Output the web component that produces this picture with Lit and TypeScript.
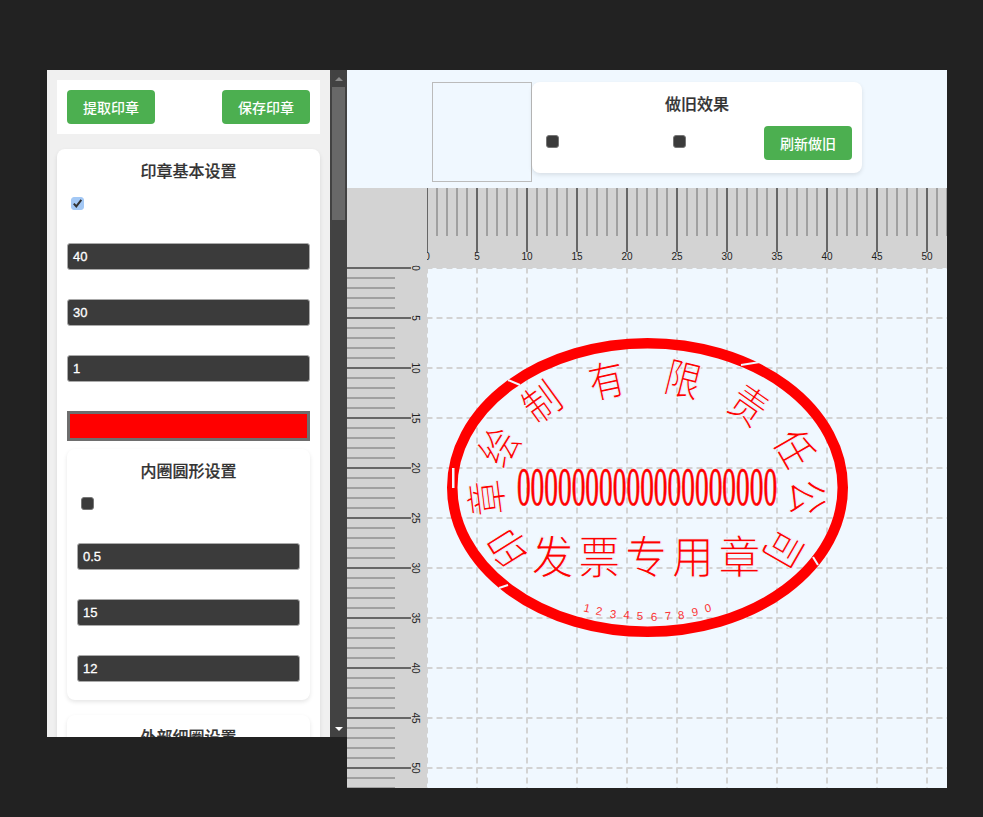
import { LitElement, html, css, svg } from "lit";
import { customElement } from "lit/decorators.js";

const CX = 220.5, CY = 219.5;

function rulerTop() {
  const out = [];
  for (let i = 0; i <= 52; i++) {
    const x = 80 + i * 10;
    if (i % 5 === 0) {
      out.push(svg`<line x1=${x} y1="0" x2=${x} y2="64" stroke="#666" stroke-width="2"></line>`);
      out.push(svg`<text class="tick" x=${x} y="72" text-anchor="middle">${i}</text>`);
    } else {
      out.push(svg`<line x1=${x} y1="0" x2=${x} y2="48" stroke="#a0a0a0" stroke-width="2"></line>`);
    }
  }
  return out;
}

function rulerLeft() {
  const out = [];
  for (let i = 0; i <= 52; i++) {
    const y = 80 + i * 10;
    if (i % 5 === 0) {
      out.push(svg`<line x1="0" y1=${y} x2="64" y2=${y} stroke="#666" stroke-width="2"></line>`);
      out.push(svg`<text class="tick" transform="translate(65 ${y}) rotate(90)" text-anchor="middle">${i}</text>`);
    } else {
      out.push(svg`<line x1="0" y1=${y} x2="48" y2=${y} stroke="#a0a0a0" stroke-width="2"></line>`);
    }
  }
  return out;
}

function grid() {
  const out = [];
  for (let i = 0; i <= 52; i += 5) {
    const p = 80 + i * 10;
    out.push(svg`<line x1=${p} y1="80" x2=${p} y2="600" stroke="#d3d3d3" stroke-width="2" stroke-dasharray="6 4" stroke-dashoffset=".5"></line>`);
    out.push(svg`<line x1="80" y1=${p} x2="600" y2=${p} stroke="#d3d3d3" stroke-width="2" stroke-dasharray="6 4" stroke-dashoffset=".5"></line>`);
  }
  return out;
}

// Characters placed around the seal: [char, x, y, rotation deg]
const ringChars: [string, number, number, number][] = [
  ["印", 159, 361, -122],
  ["章", 137, 310, -97],
  ["绘", 150, 257, -58],
  ["制", 193, 212, -36],
  ["有", 259, 190, -12],
  ["限", 337, 189, 14],
  ["责", 403, 215, 35],
  ["任", 450, 259, 60],
  ["公", 463, 309, 88],
  ["司", 439, 362, 120],
];

const codeChars: [string, number, number, number][] = [
  ["1", 240, 420, 13],
  ["2", 252, 423, 10],
  ["3", 266, 426, 6],
  ["4", 279.6, 427, 3],
  ["5", 293, 428, 0],
  ["6", 307, 429, -2],
  ["7", 321, 428, -5],
  ["8", 334, 427, -8],
  ["9", 348, 424, -11],
  ["0", 361, 420, -14],
];

@customElement("seal-canvas")
class SealCanvas extends LitElement {
  static styles = css`
    :host { display: block; width: 600px; height: 600px; }
    svg { display: block; }
    .tick { font: 10px "Liberation Sans", Arial, sans-serif; fill: #222; }
    .ring { font: 40px "Noto Sans CJK SC", sans-serif; fill: #f00; text-anchor: middle; dominant-baseline: central; }
    .main { font: 42px "Noto Sans CJK SC", sans-serif; fill: #f00; text-anchor: middle; }
    .zero { font: 27.4px "Liberation Serif", serif; fill: #f00; stroke: #f00; stroke-width: .35px; text-anchor: middle; }
    .code { font: 11.5px "Liberation Sans", Arial, sans-serif; fill: #f00; opacity: .8; text-anchor: middle; }
    .thin { stroke: #f0f8ff; stroke-width: 1px; paint-order: fill; }
  `;
  render() {
    return html`<svg width="600" height="600" viewBox="0 0 600 600">
      <rect x="0" y="0" width="600" height="80" fill="#d3d3d3"></rect>
      <rect x="0" y="80" width="80" height="520" fill="#d3d3d3"></rect>
      <rect x="80" y="80" width="520" height="520" fill="#f0f8ff"></rect>
      ${rulerTop()}
      <rect x="0" y="0" width="80" height="80" fill="#d3d3d3"></rect>
      ${rulerLeft()}${grid()}
      <ellipse cx=${CX + 80} cy=${CY + 80} rx="195.25" ry="144.25" fill="none" stroke="#f00" stroke-width="10.5"></ellipse>
      <line x1="161" y1="192" x2="173" y2="197" stroke="#f0f8ff" stroke-width="2"></line>
      <line x1="394" y1="177" x2="413" y2="174" stroke="#f0f8ff" stroke-width="2"></line>
      <line x1="152" y1="400" x2="161" y2="397" stroke="#f0f8ff" stroke-width="2"></line>
      <line x1="466" y1="369" x2="471" y2="377" stroke="#f0f8ff" stroke-width="2"></line>
      <rect x="105" y="280" width="2.5" height="20" fill="#f0f8ff"></rect>
      ${ringChars.map(([c, x, y, r]) => svg`<text class="ring thin" transform="translate(${x} ${y}) rotate(${r}) scale(.9 1.05)">${c}</text>`)}
      <text class="zero" transform="translate(300 316.5) scale(1 2)">0000000000000000000</text>
      <text class="main thin" transform="translate(299 385.5) scale(1 1.08)" textLength="229">发票专用章</text>
      ${codeChars.map(([c, x, y, r]) => svg`<text class="code" y="4" transform="translate(${x} ${y}) rotate(${r})">${c}</text>`)}
    </svg>`;
  }
}

@customElement("app-root")
class AppRoot extends LitElement {
  static styles = css`
    :host { display: block; width: 983px; height: 817px; background: #222; overflow: hidden;
      font-family: "Liberation Sans", "Noto Sans CJK SC", sans-serif; }
    .page { display: flex; align-items: flex-start; padding: 70px 0 0 47px; }
    .left { width: 300px; height: 667px; display: flex; overflow: hidden; flex: none; }
    .scroll { width: 283px; height: 667px; background: #f0f0f0; padding: 10px; box-sizing: border-box; overflow: hidden; flex: none; }
    .scrollbar { width: 17px; height: 667px; background: #424242; flex: none; display: flex; flex-direction: column; align-items: center; }
    .arrow-up { width: 0; height: 0; border: 4px solid transparent; border-top: 0; border-bottom: 4px solid #8a8a8a; margin-top: 7px; }
    .thumb { width: 13px; height: 133px; background: #686868; margin-top: 6px; }
    .arrow-down { width: 0; height: 0; border: 4px solid transparent; border-bottom: 0; border-top: 4px solid #fff; margin-top: auto; margin-bottom: 6px; }
    .actions { background: #fff; height: 54px; padding: 10px; box-sizing: border-box; display: flex; justify-content: space-between; }
    button { height: 34px; border: 0; border-radius: 4px; background: #4caf50; color: #fff; font: 500 14px "Liberation Sans", "Noto Sans CJK SC", sans-serif; padding: 0; width: 88px; }
    .card { background: #fff; border-radius: 8px; box-shadow: 0 2px 4px rgba(0,0,0,.1); padding: 10px; }
    .first { margin-top: 15px; height: 800px; }
    h3 { margin: 0; padding-top: 1px; font: 500 16px/24px "Liberation Sans", "Noto Sans CJK SC", sans-serif; -webkit-text-stroke: .2px #333; color: #333; text-align: center; }
    .check { display: block; width: 13px; height: 13px; margin: 0 0 0 4px; border-radius: 3px; background: #3b3b3b; border: 1px solid #767676; box-sizing: border-box; }
    .check.on { background: #a3c8f5; border-color: #a3c8f5; }
    .check svg { display: block; }
    .row { height: 56px; }
    .chk-row { margin-top: 13px; height: 46px; }
    .input { height: 27px; box-sizing: border-box; background: #3b3b3b; border: 1px solid #aaa; border-radius: 3px; color: #fff; font: 13px/25px "Liberation Sans", sans-serif; -webkit-text-stroke: .3px #fff; padding-left: 5px; }
    .color { height: 30px; background: #f00; border: 3px solid #6e6e6e; box-sizing: border-box; }
    .inner { margin-top: 8px; }
    .inner .row:last-child { height: 35px; }
    .third { margin-top: 15px; height: 60px; }
    .right { width: 600px; flex: none; background: #f0f8ff; }
    .top { height: 118px; display: flex; align-items: flex-start; padding: 12px 0 0 85px; box-sizing: border-box; }
    .preview { width: 100px; height: 100px; box-sizing: border-box; border: 1px solid #bbb; flex: none; }
    .effect { width: 330px; height: 91px; box-sizing: border-box; background: #fff; border-radius: 8px; box-shadow: 0 2px 4px rgba(0,0,0,.1); padding: 10px 10px 0; }
    .effect-row { display: flex; align-items: flex-start; justify-content: space-between; margin-top: 9px; }
    .effect-row .check { margin: 9px 0 0 0; }
    .checks { display: flex; gap: 114px; padding-left: 4px; }
  `;
  render() {
    const checkOff = html`<span class="check"></span>`;
    const inp = (v: string) => html`<div class="row"><div class="input">${v}</div></div>`;
    return html`<div class="page">
      <div class="left">
        <div class="scroll">
          <div class="actions"><button>提取印章</button><button>保存印章</button></div>
          <div class="card first">
            <h3>印章基本设置</h3>
            <div class="chk-row"><span class="check on"><svg width="11" height="11" viewBox="0 0 11 11"><path d="M1.8 5.6 4.3 8.4 9.3 1.9" fill="none" stroke="#333" stroke-width="2"/></svg></span></div>
            ${inp("40")}${inp("30")}${inp("1")}
            <div class="color"></div>
            <div class="card inner">
              <h3>内圈圆形设置</h3>
              <div class="chk-row">${checkOff}</div>
              ${inp("0.5")}${inp("15")}${inp("12")}
            </div>
            <div class="card third"><h3>外部细圈设置</h3></div>
          </div>
        </div>
        <div class="scrollbar"><i class="arrow-up"></i><i class="thumb"></i><i class="arrow-down"></i></div>
      </div>
      <div class="right">
        <div class="top">
          <div class="preview"></div>
          <div class="effect">
            <h3>做旧效果</h3>
            <div class="effect-row">
              <div class="checks">${checkOff}${checkOff}</div>
              <button>刷新做旧</button>
            </div>
          </div>
        </div>
        <seal-canvas></seal-canvas>
      </div>
    </div>`;
  }
}
